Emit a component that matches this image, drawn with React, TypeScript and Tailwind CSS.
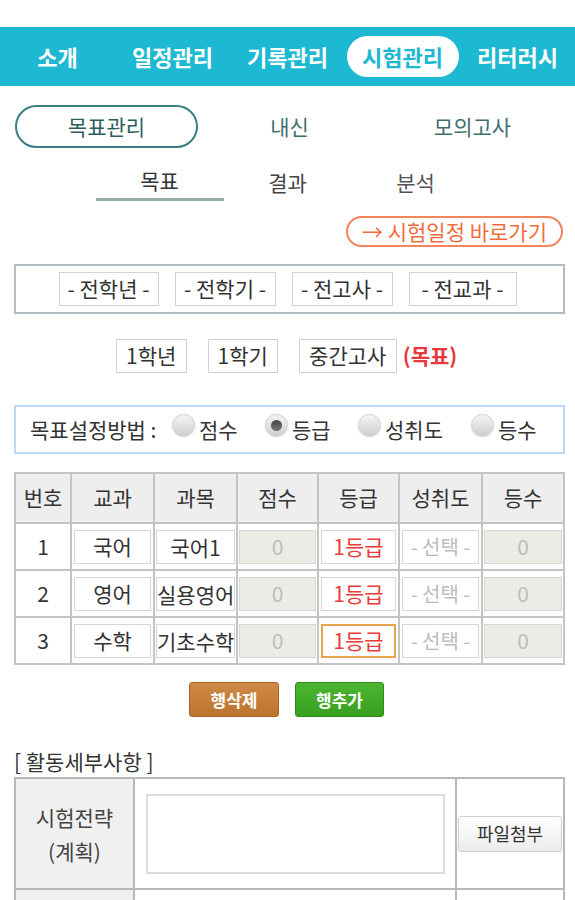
import React from 'react'

const font = { fontFamily: '"Noto Sans CJK KR", "Noto Sans", sans-serif' }

const navItems = ['소개', '일정관리', '기록관리', '시험관리', '리터러시']

const rows = [
  { no: '1', subject: '국어', course: '국어1', focus: false },
  { no: '2', subject: '영어', course: '실용영어', focus: false },
  { no: '3', subject: '수학', course: '기초수학', focus: true },
]

const Radio = ({ checked }: { checked?: boolean }) => (
  <span className="w-[23px] h-[23px] -mt-[9px] rounded-full bg-gradient-to-b from-[#f4f4f4] to-[#cfcfcf] border border-[#d4d4d4] shadow-[0_0_2px_#ddd] flex items-center justify-center shrink-0">
    {checked && <span className="w-[11px] h-[11px] rounded-full bg-gradient-to-b from-[#444] to-[#777]" />}
  </span>
)

const Box = ({ children, className = '' }: { children: React.ReactNode; className?: string }) => (
  <div className={`h-[34px] border border-[#d2d2d2] bg-white flex items-center justify-center whitespace-nowrap text-[21px] text-[#333] ${className}`}>
    {children}
  </div>
)

export default function App() {
  return (
    <div className="w-[575px] bg-white text-[#333]" style={font}>
      <div className="h-[27px]" />

      {/* Top nav */}
      <nav className="h-[59px] bg-[#1db9d3] grid grid-cols-5 items-center">
        {navItems.map((item) => (
          <div key={item} className="flex justify-center">
            {item === '시험관리' ? (
              <span className="w-[112px] h-[41px] rounded-full bg-white text-[#1db9d3] text-[22px] font-semibold flex items-center justify-center">
                {item}
              </span>
            ) : (
              <span className="text-white text-[22px] font-semibold">{item}</span>
            )}
          </div>
        ))}
      </nav>

      {/* Main tabs */}
      <div className="mx-[15px] mt-[19px] grid grid-cols-3 w-[549px]">
        <div className="h-[43px] rounded-full border-2 border-[#3a7f80] flex items-center justify-center text-[21px] text-[#2f5d5e]">
          목표관리
        </div>
        <div className="flex items-center justify-center text-[21px] text-[#3f6e6e]">내신</div>
        <div className="flex items-center justify-center text-[21px] text-[#3f6e6e]">모의고사</div>
      </div>

      {/* Sub tabs */}
      <div className="flex justify-center mt-[16px]">
        <div className="w-[128px] h-[37px] flex items-center justify-center text-[21px] text-[#333] border-b-[3px] border-[#98acac]">목표</div>
        <div className="w-[128px] h-[37px] flex items-center justify-center text-[21px] text-[#444]">결과</div>
        <div className="w-[128px] h-[37px] flex items-center justify-center text-[21px] text-[#555]">분석</div>
      </div>

      <div className="flex justify-end pr-[12px] mt-[15px]">
        <div className="w-[217px] h-[31px] rounded-full border-2 border-[#f4845a] text-[#f26b3c] text-[21px] flex items-center justify-center whitespace-nowrap">
          → 시험일정 바로가기
        </div>
      </div>

      {/* Filter selects */}
      <div className="ml-[14px] w-[551px] mt-[17px] h-[50px] border-2 border-[#b3bcc2] flex items-center justify-center gap-[16px] pr-[4px]">
        <Box className="w-[100px]">- 전학년 -</Box>
        <Box className="w-[101px]">- 전학기 -</Box>
        <Box className="w-[101px]">- 전고사 -</Box>
        <Box className="w-[108px]">- 전교과 -</Box>
      </div>

      <div className="mt-[25px] flex items-center justify-center gap-[21px] pr-[2px]">
        <Box className="w-[71px]">1학년</Box>
        <Box className="w-[70px]">1학기</Box>
        <div className="flex items-center gap-[6px]">
          <Box className="w-[98px]">중간고사</Box>
          <span className="text-[21px] font-semibold text-[#e8383d]">(목표)</span>
        </div>
      </div>

      {/* Method radios */}
      <div className="ml-[14px] w-[551px] mt-[32px] h-[49px] border-2 border-[#bcd8f6] flex items-center pl-[14px] text-[21px] text-[#333]">
        <span className="w-[142px] whitespace-nowrap">목표설정방법 :</span>
        <div className="flex items-center gap-[4px] w-[93px]"><Radio /><span>점수</span></div>
        <div className="flex items-center gap-[4px] w-[93px]"><Radio checked /><span>등급</span></div>
        <div className="flex items-center gap-[4px] w-[113px]"><Radio /><span>성취도</span></div>
        <div className="flex items-center gap-[4px]"><Radio /><span>등수</span></div>
      </div>

      {/* Grade table */}
      <table className="ml-[14px] mt-[18px] border-collapse text-[21px] text-[#333] table-fixed w-[549px]">
        <colgroup>
          <col className="w-[56px]" />
          <col className="w-[83px]" />
          <col className="w-[83px]" />
          <col className="w-[81px]" />
          <col className="w-[81px]" />
          <col className="w-[83px]" />
          <col className="w-[82px]" />
        </colgroup>
        <thead>
          <tr className="h-[50px] bg-[#eeeeee]">
            {['번호', '교과', '과목', '점수', '등급', '성취도', '등수'].map((h) => (
              <th key={h} className="border-2 border-[#c4c4c4] font-normal">{h}</th>
            ))}
          </tr>
        </thead>
        <tbody>
          {rows.map((r) => (
            <tr key={r.no} className="h-[47px]">
              <td className="border-2 border-[#c4c4c4] text-center">{r.no}</td>
              <td className="border-2 border-[#c4c4c4] px-[2px]">
                <div className="h-[34px] border border-[#d6d6d6] flex items-center justify-center">{r.subject}</div>
              </td>
              <td className="border-2 border-[#c4c4c4] px-[1px]">
                <div className="h-[34px] border border-[#d6d6d6] text-center leading-[32px] overflow-hidden whitespace-nowrap">{r.course}</div>
              </td>
              <td className="border-2 border-[#c4c4c4] px-[1px]">
                <div className="h-[34px] border border-[#d6d6d6] bg-[#ecece6] text-[#bdbdbd] flex items-center justify-center">0</div>
              </td>
              <td className="border-2 border-[#c4c4c4] px-[2px]">
                <div className={`h-[34px] flex items-center justify-center text-[#ea3b3b] bg-white ${r.focus ? 'border-2 border-[#e7a64a]' : 'border border-[#d6d6d6]'}`}>1등급</div>
              </td>
              <td className="border-2 border-[#c4c4c4] px-[2px]">
                <div className="h-[34px] border border-[#d6d6d6] flex items-center justify-center text-[#bcbcbc] text-[20px] whitespace-nowrap overflow-hidden">- 선택 -</div>
              </td>
              <td className="border-2 border-[#c4c4c4] px-[1px]">
                <div className="h-[34px] border border-[#d6d6d6] bg-[#ecece6] text-[#bdbdbd] flex items-center justify-center">0</div>
              </td>
            </tr>
          ))}
        </tbody>
      </table>

      {/* Row buttons */}
      <div className="mt-[17px] flex justify-center gap-[16px] pr-[2px]">
        <button className="w-[90px] h-[35px] rounded-[3px] bg-gradient-to-b from-[#cf8a45] to-[#bb7430] border border-[#a86526] text-white text-[17px] font-bold">
          행삭제
        </button>
        <button className="w-[89px] h-[35px] rounded-[3px] bg-gradient-to-b from-[#4cb530] to-[#37a01e] border border-[#2f8c18] text-white text-[17px] font-bold">
          행추가
        </button>
      </div>

      <div className="mt-[31px] ml-[14px] text-[21px] leading-[26px] text-[#333]">[ 활동세부사항 ]</div>

      {/* Activity table */}
      <table className="ml-[14px] mt-[3px] border-collapse w-[549px] table-fixed text-[21px] text-[#444]">
        <colgroup>
          <col className="w-[119px]" />
          <col className="w-[322px]" />
          <col className="w-[108px]" />
        </colgroup>
        <tbody>
          <tr className="h-[111px]">
            <td className="border-2 border-[#b8b8b8] bg-[#f0f0f0] text-center leading-[34px]">
              시험전략<br />(계획)
            </td>
            <td className="border-2 border-[#b8b8b8] pl-[11px] pr-[10px]">
              <div className="h-[80px] border-2 border-[#dcdcdc] bg-white" />
            </td>
            <td className="border-2 border-[#b8b8b8] px-[1px]">
              <div className="h-[36px] rounded-[3px] border border-[#cfcfcf] bg-gradient-to-b from-white to-[#ececec] flex items-center justify-center text-[18px] text-[#333]">
                파일첨부
              </div>
            </td>
          </tr>
          <tr className="h-[111px]">
            <td className="border-2 border-[#b8b8b8] bg-[#f0f0f0]" />
            <td className="border-2 border-[#b8b8b8]" />
            <td className="border-2 border-[#b8b8b8]" />
          </tr>
        </tbody>
      </table>
    </div>
  )
}
